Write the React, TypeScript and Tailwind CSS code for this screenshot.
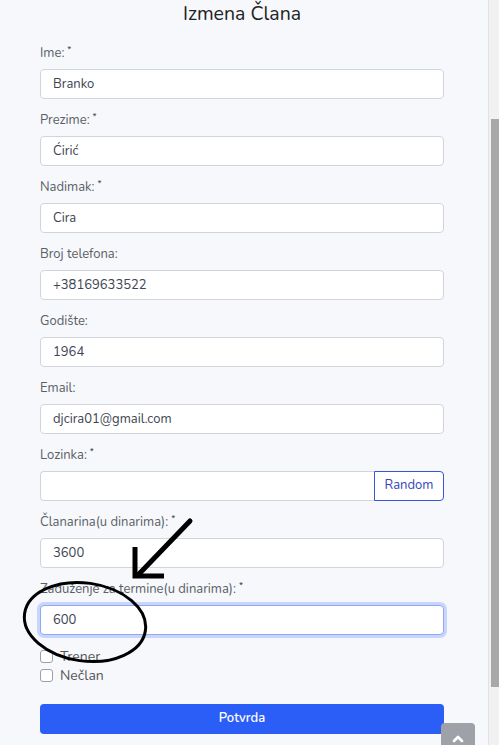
import { ChevronUp } from "lucide-react";

const fields = [
  { label: "Ime:", value: "Branko", required: true },
  { label: "Prezime:", value: "Ćirić", required: true },
  { label: "Nadimak:", value: "Cira", required: true },
  { label: "Broj telefona:", value: "+38169633522", required: false },
  { label: "Godište:", value: "1964", required: false },
  { label: "Email:", value: "djcira01@gmail.com", required: false },
];

function Label({ text, required }: { text: string; required?: boolean }) {
  return (
    <label className="block h-[20px] mb-[7px] text-[13px] leading-[23px] text-[#5a5f66]">
      {text}
      {required && <sup className="ml-[3px] text-[9px] text-[#333]">*</sup>}
    </label>
  );
}

function Field({ label, value, required, focused }: { label: string; value: string; required?: boolean; focused?: boolean }) {
  return (
    <div className="mb-[10px]">
      <Label text={label} required={required} />
      <input
        readOnly
        value={value}
        className={
          focused
            ? "block w-full h-[30px] px-[12px] text-[13px] text-[#3d4451] bg-white rounded-[4px] border border-[#8fa8f7] ring-[3px] ring-[#c9d6fb] outline-none"
            : "block w-full h-[30px] px-[12px] text-[13px] text-[#3d4451] bg-white rounded-[4px] border border-[#d1d5db] outline-none"
        }
      />
    </div>
  );
}

export default function App() {
  return (
    <div className="relative flex h-[745px] w-[499px] overflow-hidden bg-[#f6f8fc] font-['Nunito',Lato,'Open_Sans',sans-serif]">
      <div className="flex-1 pl-[40px] pr-[44px]">
        <h1 className="h-[28px] mb-[14px] text-center text-[19.5px] leading-[28px] text-[#222]">Izmena Člana</h1>

        {fields.map((f) => (
          <Field key={f.label} label={f.label} value={f.value} required={f.required} />
        ))}

        <div className="mb-[10px]">
          <Label text="Lozinka:" required />
          <div className="flex h-[30px]">
            <input readOnly className="flex-1 min-w-0 h-full px-[12px] bg-white border border-[#d1d5db] border-r-0 rounded-l-[4px] outline-none" />
            <button className="h-full w-[70px] border border-[#3556d6] rounded-r-[4px] bg-white text-[13px] text-[#3346b8]">
              Random
            </button>
          </div>
        </div>

        <Field label="Članarina(u dinarima):" value="3600" required />
        <Field label="Zaduženje za termine(u dinarima):" value="600" required focused />

        <div className="mt-[12px] flex flex-col">
          <label className="flex items-center h-[19px] text-[14px] text-[#555]">
            <span className="w-[13px] h-[13px] rounded-[3px] border border-[#9aa0a6] bg-white mr-[7px]" />
            Trener
          </label>
          <label className="flex items-center h-[19px] text-[14px] text-[#555]">
            <span className="w-[13px] h-[13px] rounded-[3px] border border-[#9aa0a6] bg-white mr-[7px]" />
            Nečlan
          </label>
        </div>

        <button className="mt-[19px] w-full h-[30px] rounded-[4px] bg-[#2b5ef7] text-white text-[13px] font-semibold">
          Potvrda
        </button>
      </div>

      <div className="w-[11px] h-full border-l border-[#e2e2e2] bg-[#f1f1f1] pt-[119px] pl-[2px]">
        <div className="h-[568px] w-full bg-[#a8a8a8]" />
      </div>

      <div className="absolute left-[441px] top-[723px] w-[34px] h-[30px] rounded-[4px] bg-[#9ea2a8] flex justify-center pt-[8px]">
        <ChevronUp size={16} strokeWidth={4} className="text-white" />
      </div>

      <svg className="absolute inset-0 pointer-events-none" width="499" height="745">
        <line x1="190" y1="521" x2="139" y2="574" stroke="#000" strokeWidth="5" strokeLinecap="round" />
        <polyline points="135,547 135,576 164,576" fill="none" stroke="#000" strokeWidth="5" />
        <ellipse cx="85" cy="622" rx="61" ry="39" fill="none" stroke="#000" strokeWidth="3" transform="rotate(8 85 622)" />
      </svg>
    </div>
  );
}
